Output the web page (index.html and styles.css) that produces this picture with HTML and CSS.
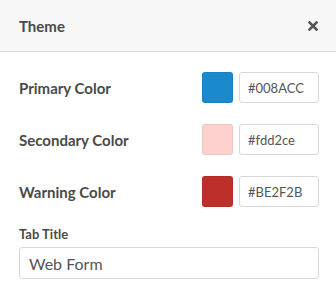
FILE: index.html
```html
<!DOCTYPE html>
<html>
<head>
<meta charset="utf-8">
<link rel="stylesheet" href="styles.css">
</head>
<body>
<div class="panel">
  <div class="header">
    <span class="title">Theme</span>
    <svg class="close" width="10" height="10" viewBox="0 0 10 10"><path d="M1.5 1.5 L8.5 8.5 M8.5 1.5 L1.5 8.5" stroke="#555" stroke-width="2.6" stroke-linecap="square"/></svg>
  </div>
  <div class="body">
    <div class="row">
      <span class="label">Primary Color</span>
      <span class="swatch swatch-primary"></span>
      <span class="hex">#008ACC</span>
    </div>
    <div class="row">
      <span class="label">Secondary Color</span>
      <span class="swatch swatch-secondary"></span>
      <span class="hex">#fdd2ce</span>
    </div>
    <div class="row">
      <span class="label">Warning Color</span>
      <span class="swatch swatch-warning"></span>
      <span class="hex">#BE2F2B</span>
    </div>
    <div class="field">
      <div class="field-label">Tab Title</div>
      <div class="text-input">Web Form</div>
    </div>
  </div>
</div>
</body>
</html>
```
FILE: styles.css
```css
html, body {
  margin: 0;
  padding: 0;
  background: #fff;
}
body {
  font-family: Lato, "Open Sans", sans-serif;
  color: #4a4a4a;
  width: 336px;
}
.header {
  height: 52px;
  background: #f7f7f7;
  border-bottom: 1px solid #dcdcdc;
  display: flex;
  align-items: center;
  justify-content: space-between;
  padding: 0 18px 0 19px;
  box-sizing: border-box;
}
.title {
  font-size: 15px;
  font-weight: 700;
  color: #4a4a4a;
}
.close {
  display: block;
}
.body {
  padding: 20px 17px 0 19px;
  display: flex;
  flex-direction: column;
  gap: 21px;
}
.row {
  display: flex;
  align-items: center;
  height: 31px;
}
.label {
  flex: 1;
  font-size: 15px;
  font-weight: 700;
  color: #4a4a4a;
}
.swatch {
  width: 31px;
  height: 31px;
  border-radius: 3px;
  margin-right: 6px;
  box-sizing: border-box;
  border: 1px solid rgba(0,0,0,0.06);
}
.swatch-primary { background: #1b8acc; }
.swatch-secondary { background: #fdd2ce; }
.swatch-warning { background: #be2f2b; }
.hex {
  width: 80px;
  height: 31px;
  box-sizing: border-box;
  border: 1px solid #d8d8d8;
  border-radius: 3px;
  padding-left: 8px;
  display: flex;
  align-items: center;
  font-size: 13px;
  color: #555;
}
.field {
  margin-top: -2px;
}
.field-label {
  font-size: 13px;
  font-weight: 700;
  line-height: 16px;
  margin-bottom: 5px;
}
.text-input {
  height: 32px;
  box-sizing: border-box;
  border: 1px solid #d8d8d8;
  border-radius: 3px;
  padding-left: 9px;
  display: flex;
  align-items: center;
  font-size: 16px;
  color: #555;
}
```
